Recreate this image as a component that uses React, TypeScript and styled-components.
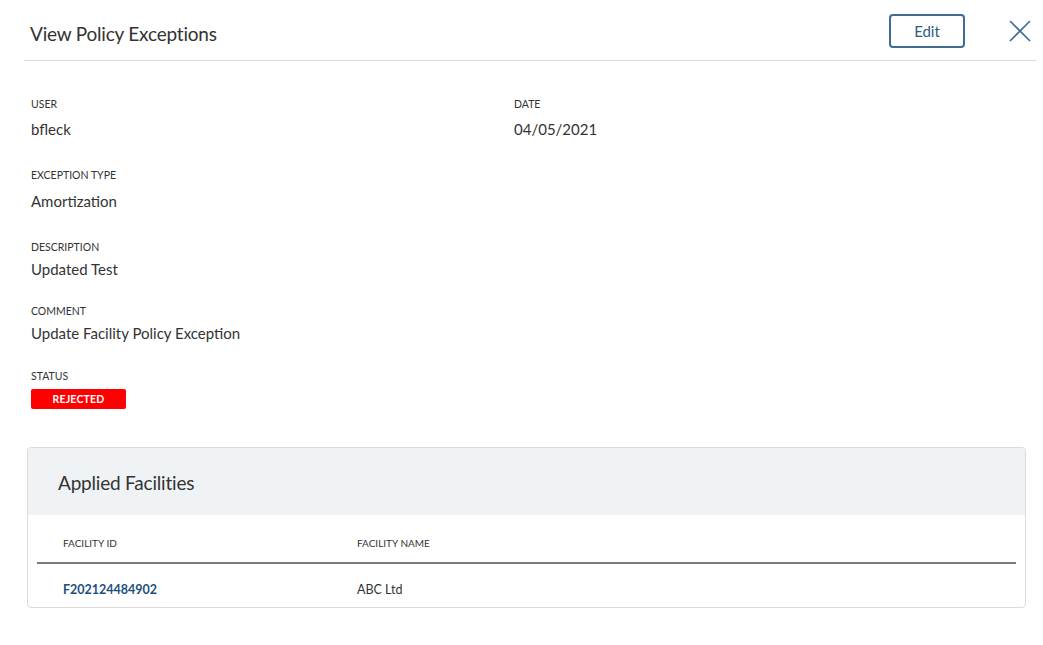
import React from "react";
import styled, { createGlobalStyle } from "styled-components";

const Global = createGlobalStyle`
  html, body { margin: 0; padding: 0; background: #fff; }
  body { font-family: Lato, "Open Sans", sans-serif; color: #333; }
  * { box-sizing: border-box; }
`;

const Page = styled.div`
  width: 1043px;
  padding: 0 7px 0 24px;
`;

const Header = styled.div`
  display: flex;
  align-items: center;
  height: 61px;
  border-bottom: 1px solid #d9d9d9;
  padding: 0 4px 0 6px;
`;

const Title = styled.h1`
  flex: 1;
  margin: 0;
  font-size: 19px;
  letter-spacing: -0.2px;
  font-weight: 400;
  color: #333;
  padding-top: 6px;
`;

const EditButton = styled.button`
  width: 76px;
  height: 34px;
  border: 2px solid #3f6b94;
  border-radius: 4px;
  background: #fff;
  color: #2d5a82;
  font-family: inherit;
  font-size: 15px;
  margin-top: 1px;
  margin-right: 43px;
`;

const Close = styled.div`
  width: 24px;
  height: 24px;
  display: flex;
  margin-top: 2px;
`;

const Body = styled.div`
  padding: 37px 0 0 7px;
`;

const Grid = styled.div`
  display: grid;
  grid-template-columns: 483px 1fr;
`;

const Field = styled.div<{ $gap: number; $after: number }>`
  display: flex;
  flex-direction: column;
  gap: ${(p) => p.$gap}px;
  margin-bottom: ${(p) => p.$after}px;
`;

const Label = styled.div`
  font-size: 10.5px;
  color: #333;
  text-transform: uppercase;
  line-height: 13px;
`;

const Value = styled.div`
  font-size: 15px;
  color: #333;
  line-height: 18px;
`;

const Badge = styled.div`
  width: 95px;
  height: 20px;
  background: #ff0000;
  color: #fff;
  border-radius: 2px;
  font-size: 10.5px;
  font-weight: 700;
  display: flex;
  align-items: center;
  justify-content: center;
  letter-spacing: 0.2px;
`;

const Card = styled.div`
  margin: 38px 10px 0 3px;
  border: 1px solid #dcdcdc;
  border-radius: 4px;
  overflow: hidden;
`;

const CardHead = styled.div`
  background: #eff3f6;
  height: 67px;
  display: flex;
  align-items: center;
  padding-left: 30px;
  padding-top: 2px;
  font-size: 19px;
  letter-spacing: -0.2px;
  color: #333;
`;

const Table = styled.div`
  padding: 0 9px 0 9px;
`;

const Row = styled.div<{ $head?: boolean }>`
  display: grid;
  grid-template-columns: 294px 1fr;
  align-items: center;
  padding-left: 26px;
  height: ${(p) => (p.$head ? "49px" : "43px")};
  padding-top: ${(p) => (p.$head ? "8px" : "7px")};
  border-bottom: ${(p) => (p.$head ? "2px solid #7a7a7a" : "none")};
`;

const HeadCell = styled.div`
  font-size: 10px;
  color: #333;
  text-transform: uppercase;
`;

const Cell = styled.div<{ $link?: boolean }>`
  font-size: 12.5px;
  color: ${(p) => (p.$link ? "#1d4f7e" : "#333")};
  font-weight: ${(p) => (p.$link ? 700 : 400)};
`;

export default function App() {
  return (
    <>
      <Global />
      <Page>
        <Header>
          <Title>View Policy Exceptions</Title>
          <EditButton>Edit</EditButton>
          <Close>
            <svg width="24" height="24" viewBox="0 0 24 24">
              <path d="M2 2 L22 22 M22 2 L2 22" stroke="#3f6b94" strokeWidth="1.6" fill="none" />
            </svg>
          </Close>
        </Header>
        <Body>
          <Grid>
            <Field $gap={9} $after={31}>
              <Label>User</Label>
              <Value>bfleck</Value>
            </Field>
            <Field $gap={9} $after={31}>
              <Label>Date</Label>
              <Value>04/05/2021</Value>
            </Field>
          </Grid>
          <Field $gap={10} $after={31}>
            <Label>Exception Type</Label>
            <Value>Amortization</Value>
          </Field>
          <Field $gap={6} $after={27}>
            <Label>Description</Label>
            <Value>Updated Test</Value>
          </Field>
          <Field $gap={6} $after={28}>
            <Label>Comment</Label>
            <Value>Update Facility Policy Exception</Value>
          </Field>
          <Field $gap={6} $after={0}>
            <Label>Status</Label>
            <Badge>REJECTED</Badge>
          </Field>
        </Body>
        <Card>
          <CardHead>Applied Facilities</CardHead>
          <Table>
            <Row $head>
              <HeadCell>Facility ID</HeadCell>
              <HeadCell>Facility Name</HeadCell>
            </Row>
            <Row>
              <Cell $link>F202124484902</Cell>
              <Cell>ABC Ltd</Cell>
            </Row>
          </Table>
        </Card>
      </Page>
    </>
  );
}
